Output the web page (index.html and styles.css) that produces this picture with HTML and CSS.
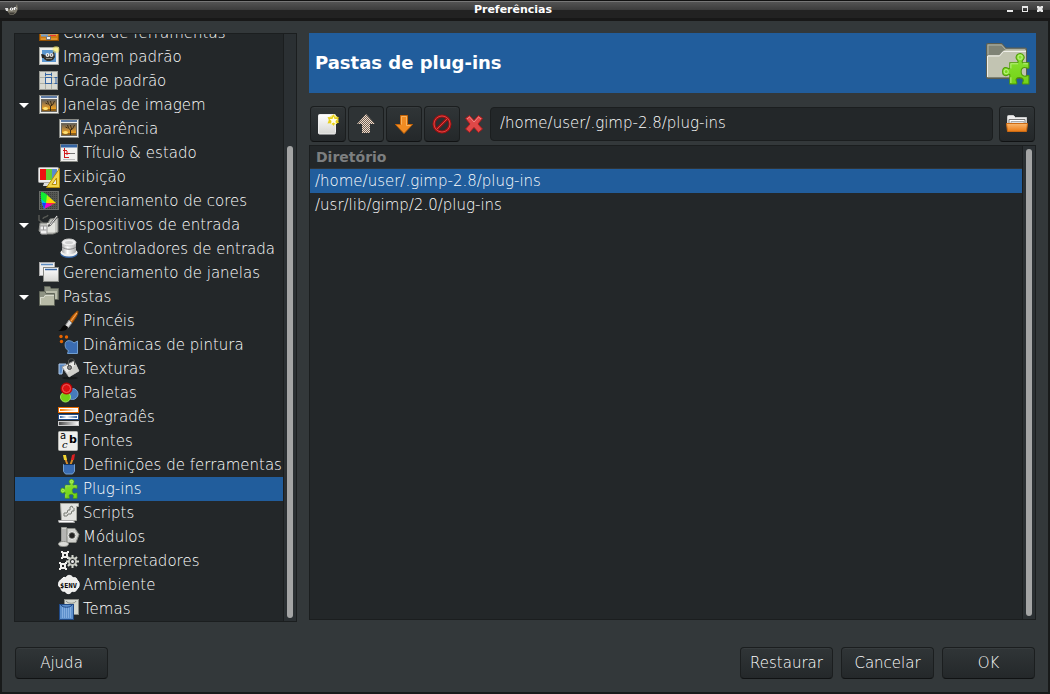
FILE: index.html
```html
<!DOCTYPE html>
<html lang="pt-BR">
<head>
<meta charset="utf-8">
<title>Preferências</title>
<link rel="stylesheet" href="styles.css">
</head>
<body>
<svg class="defs" width="0" height="0" aria-hidden="true">
  <defs>
    <linearGradient id="sunset" x1="0" y1="0" x2="0" y2="1"><stop offset="0" stop-color="#5d5c5a"/><stop offset=".45" stop-color="#b5853f"/><stop offset=".8" stop-color="#f2a21c"/><stop offset="1" stop-color="#9a6414"/></linearGradient>
    <linearGradient id="paper" x1="0" y1="0" x2="0" y2="1"><stop offset="0" stop-color="#fff"/><stop offset="1" stop-color="#d6d6d2"/></linearGradient>
    <linearGradient id="orange" x1="0" y1="0" x2="0" y2="1"><stop offset="0" stop-color="#f9b870"/><stop offset="1" stop-color="#ea7a14"/></linearGradient>
    <linearGradient id="og" x1="0" y1="0" x2="1" y2="0"><stop offset="0" stop-color="#f57900"/><stop offset="1" stop-color="#fff"/></linearGradient>
    <linearGradient id="bg" x1="0" y1="0" x2="1" y2="0"><stop offset="0" stop-color="#3465a4"/><stop offset=".4" stop-color="#fff"/><stop offset="1" stop-color="#3465a4"/></linearGradient>
    <linearGradient id="gg" x1="0" y1="0" x2="1" y2="0"><stop offset="0" stop-color="#444"/><stop offset="1" stop-color="#fff"/></linearGradient>
    <linearGradient id="knob" x1="0" y1="0" x2="1" y2="0"><stop offset="0" stop-color="#aaa"/><stop offset=".4" stop-color="#fff"/><stop offset="1" stop-color="#aaa"/></linearGradient>
    <linearGradient id="leaf" x1="0" y1="0" x2="0" y2="1"><stop offset="0" stop-color="#8ae234"/><stop offset="1" stop-color="#73d216"/></linearGradient>
    <pattern id="dots" width="2" height="2" patternUnits="userSpaceOnUse"><rect width="2" height="2" fill="#6d6257"/><rect width="1" height="1" fill="#f3dccb"/><rect x="1" y="1" width="1" height="1" fill="#f3dccb"/></pattern>
    <pattern id="mesh" width="2" height="2" patternUnits="userSpaceOnUse"><rect width="2" height="2" fill="#555753"/><rect width="1" height="1" fill="#3d3f3e"/></pattern>
    <symbol id="window-picture" viewBox="0 0 22 22">
      <rect x="1.5" y="1.5" width="19" height="18" fill="#eeeeec" stroke="#888a85"/>
      <path d="M3 3h16" stroke="#204a87" stroke-width="1.4"/>
      <rect x="3.5" y="5.5" width="15" height="12" fill="url(#sunset)" stroke="#6f6a5f"/>
      <path d="M4 15h14v2H4z" fill="#8b5e19"/><ellipse cx="7.500" cy="14.500" rx="2.500" ry="1.500" fill="#ffe173"/>
      <path d="M12.500 17v-5l-2-2-1-3m3 5 2-1 2-4m-3 4-1-4m-3 3-2-1" fill="none" stroke="#3a2b16"/>
    </symbol>
    <symbol id="puzzle" viewBox="0 0 27 31">
      <path d="M7.500 10.500H15c1-1 .5-2-.5-3-2-2-.5-6 3-6s5 4 3 6c-1 1-1.500 2-.5 3h6v5c-1 1-2-.5-4-.5-2.500 0-3.500 2-3.500 4s1 4.500 3.500 4.500c2 0 3-1.500 4-.5v8H20c-1-1 1-2 .5-4-.5-3-7-3-7 0 0 2 1.500 3 .5 4H7.500v-9c-1-1-2 1-4 1C1.500 23 .5 21 .5 19s1-4 3-4 3 2 4 1z" transform="translate(0 -1)" fill="url(#leaf)" stroke="#4e9a06"/>
      <path d="M8.500 15v-4.500h7m5 0h4.500m-16.500 13v5.500" fill="none" stroke="#b8f27c"/>
      <ellipse cx="17.500" cy="4" rx="2" ry="2" fill="none" stroke="#b8f27c"/><circle cx="4" cy="18" r="2" fill="none" stroke="#b8f27c"/>
    </symbol>
  </defs>
</svg>
<div class="window">
  <header class="titlebar">
    <svg class="app-icon" viewBox="0 0 14 12" aria-hidden="true"><path d="M1 4l4 1 5-1 2-4 1 5-2 4-3 2H5L3 8 1 6z" fill="#7d796c"/><path d="M0 4h3v3H1z" fill="#ddd"/><circle cx="6.500" cy="5" r="1.600" fill="#fff"/><circle cx="10" cy="4.500" r="1.500" fill="#fff"/><path d="M6 5h1m3 0h1" stroke="#111"/><path d="M4 8.500h6l-2 2H5z" fill="#3b3832"/></svg>
    <h1 class="window-title">Preferências</h1>
    <div class="window-controls">
      <button class="window-control" aria-label="Minimizar"><svg viewBox="0 0 7 7"><path d="M0 4h6v2H0z" fill="#e8e8e8"/></svg></button>
      <button class="window-control" aria-label="Maximizar"><svg viewBox="0 0 7 7"><path d="M0 0h6v6H0zM1 2v3h4V2z" fill="#e8e8e8" fill-rule="evenodd"/></svg></button>
      <button class="window-control" aria-label="Fechar"><svg viewBox="0 0 7 7"><path d="M0 0h2l1 1 1-1h2v2L5 3l1 1v2H4L3 5 2 6H0V4l1-1-1-1z" fill="#e8e8e8"/></svg></button>
    </div>
  </header>

  <div class="content">
    <nav class="panel sidebar" aria-label="Categorias">
      <ul class="tree" role="tree">
        <li class="item" role="treeitem"><span class="expander"></span><svg class="icon" viewBox="0 0 22 22"><rect x="1.500" y="3.500" width="19" height="15" fill="#ce7b12" stroke="#8f4e02"/><path d="M3 12h16v1H3zM3 17h16" stroke="#f5ac42" fill="#3465a4"/><rect x="8.500" y="14.500" width="4" height="3" fill="#eee" stroke="#777"/><path d="M3 13.500h7" stroke="#729fcf" stroke-width="2"/><path d="M12 13.500h6" stroke="#e33"/></svg>Caixa de ferramentas</li>
        <li class="item" role="treeitem"><span class="expander"></span><svg class="icon" viewBox="0 0 22 22"><rect x="1.500" y="1.500" width="19" height="17" fill="#eeeeec" stroke="#a5a7a2"/><rect x="4" y="4" width="14" height="12" fill="#5b96cf"/><path d="M4 8l3 1 7-1 2-3 1 6-2 3-3 1H9l-3-2z" fill="#33322e"/><path d="M3 8l3 1v3H4z" fill="#222"/><circle cx="9.500" cy="9" r="2" fill="#eee"/><circle cx="13.500" cy="9" r="2" fill="#ddd"/><path d="M9 9h1m3 0h1" stroke="#111"/><path d="M8 12.500h6" stroke="#8d877b"/><circle cx="18" cy="3.500" r="3.500" fill="#f7e65d" opacity=".5"/><circle cx="18" cy="3.500" r="2" fill="#fff38c"/></svg>Imagem padrão</li>
        <li class="item" role="treeitem"><span class="expander"></span><svg class="icon" viewBox="0 0 22 22"><rect x="1.500" y="1.500" width="18" height="18" fill="#d8dad2" stroke="#9b9d97"/><path d="M7.500 2v17m6-17v17M2 7.500h17m-17 6h17" stroke="#adb0a5"/><rect x="7.500" y="7.500" width="6" height="6" fill="#e2e3de" stroke="#3465a4"/><path d="M7 4.500h7M7.500 3v3m6-3v3m3 1.500h3m-3 6h3m-1.500-6v6" stroke="#3465a4" fill="none"/></svg>Grade padrão</li>
        <li class="item" role="treeitem" aria-expanded="true"><span class="expander open"></span><svg class="icon"><use href="#window-picture"/></svg>Janelas de imagem</li>
        <li class="item child" role="treeitem"><svg class="icon"><use href="#window-picture"/></svg>Aparência</li>
        <li class="item child" role="treeitem"><svg class="icon" viewBox="0 0 22 22"><rect x="2.500" y="2.500" width="17" height="17" fill="#f1f1ef" stroke="#888a85"/><path d="M3 4h16" stroke="#3465a4" stroke-width="3"/><path d="M5 8.500h4m-2 3h5m-5 4h4M6.500 6v10M9 9v4" stroke="#d01818"/><path d="M12 11.500h5" stroke="#777"/><path d="M5 17.500h12" stroke="#bbb"/></svg>Título &amp; estado</li>
        <li class="item" role="treeitem"><span class="expander"></span><svg class="icon" viewBox="0 0 22 22"><path d="M6 17h9v3H5z" fill="#ddd"/><rect x=".5" y="1.500" width="20" height="15" rx="1" fill="#eee" stroke="#aaa"/><path d="M2 3h6v11H2z" fill="#e11"/><path d="M8 3h6v11H8z" fill="#66ce32"/><path d="M14 3h5v11h-5z" fill="#588ace"/><path d="M21.500 2.500v19h-13z" fill="#f1d64b" stroke="#b68c05"/><path d="M18.500 12v6.500H14z" fill="#eee" stroke="#b68c05"/></svg>Exibição</li>
        <li class="item" role="treeitem"><span class="expander"></span><svg class="icon" viewBox="0 0 22 22"><rect x="1.500" y="1.500" width="19" height="18" fill="url(#mesh)" stroke="#6a6c69"/><path d="M3 2q4 0 8 5l7 6q-6 2-12 6Q2 10 3 2z" fill="#1e3"/><path d="M11 7l7 6-10 0z" fill="#fc0"/><path d="M9 5l3 3-4 5z" fill="#be1"/><path d="M18 13l-10 4 0-4z" fill="#f24"/><path d="M14 15l-8 4 2-6z" fill="#e0c"/><path d="M3 9l5 4-2 6q-2-5-3-10z" fill="#0be"/><path d="M4 13l4 0-2 6z" fill="#23f"/></svg>Gerenciamento de cores</li>
        <li class="item" role="treeitem" aria-expanded="true"><span class="expander open"></span><svg class="icon" viewBox="0 0 22 22"><path d="M1 1v5l4 3m0-4c0-3 4-1 5-4" fill="none" stroke="#555753" stroke-width="1.500"/><path d="M2 9h8l2-4 8-1v14l-5 2H4l-3-3z" fill="#c5c6c1" stroke="#7b7d78"/><path d="M9 9h8v9H9z" fill="#e3e4df"/><path d="M2 12h7v8H3l-1-3z" fill="#eee" stroke="#999"/><path d="M5.500 12v4m-3 0h6" stroke="#999"/><path d="M19.500 2L12 11l-2 1" stroke="#555" stroke-width="2" fill="none"/><path d="M19 2l-7 9" stroke="#eee"/></svg>Dispositivos de entrada</li>
        <li class="item child" role="treeitem"><svg class="icon" viewBox="0 0 22 22"><ellipse cx="11" cy="16" rx="8.500" ry="4" fill="#3465a4"/><ellipse cx="11" cy="14.500" rx="8.500" ry="4" fill="#f0f0ef"/><path d="M4 4v10c3 3 11 3 14 0V4z" fill="url(#knob)"/><path d="M4 9c4 3 10 3 14 0" fill="none" stroke="#888"/><ellipse cx="11" cy="4.500" rx="7" ry="3.500" fill="#eee" stroke="#ccc"/><ellipse cx="11" cy="4.500" rx="4" ry="1.500" fill="#cfcfcf"/></svg>Controladores de entrada</li>
        <li class="item" role="treeitem"><span class="expander"></span><svg class="icon" viewBox="0 0 22 22"><rect x="1.500" y=".5" width="15" height="13" fill="#eee" stroke="#aaa"/><path d="M3 2.500h12" stroke="#5d8dc2" stroke-width="1.500"/><rect x="5.500" y="5.500" width="15" height="14" fill="url(#paper)" stroke="#888a85"/><path d="M7 7.500h12" stroke="#3465a4" stroke-width="1.500"/></svg>Gerenciamento de janelas</li>
        <li class="item" role="treeitem" aria-expanded="true"><span class="expander open"></span><svg class="icon" viewBox="0 0 22 22"><path d="M6.500 10V.5H12l1 2h7.500v11H17" fill="#8f9484" stroke="#62675b"/><path d="M8 5h11v8H8z" fill="#babdab"/><path d="M1.500 19.500v-14H7l1 2h8.500v12z" fill="#8f9484" stroke="#62675b"/><path d="M2 11h4l1-2h9v10H2z" fill="#b8bba7"/><path d="M2.500 18v-6.500H6l1-2h9" fill="none" stroke="#d8dacd"/></svg>Pastas</li>
        <li class="item child" role="treeitem"><svg class="icon" viewBox="0 0 22 22"><path d="M20 1c0 4-3 8-6 12l-3-2c2-4 6-9 9-10z" fill="#ce6a10" stroke="#8f4902"/><path d="M19 3l-6 8" stroke="#f8b066"/><path d="M11 10l3 3-4 5-3-2z" fill="#ddd" stroke="#888"/><path d="M7 15l3 2c-1 4-5 4-10 4 4-1 3-5 7-6z" fill="#080808"/></svg>Pincéis</li>
        <li class="item child" role="treeitem"><svg class="icon" viewBox="0 0 22 22"><g fill="#e66500"><circle cx="3" cy="2.500" r="1.700"/><circle cx="8.500" cy="3" r="1.700"/><circle cx="3.500" cy="7.500" r="1.700"/></g><path d="M7.500 8.500C9 6 13 6 16 9l3.500-2v12.500H9.500l1-3c-3-1-4-5-3-8z" fill="#3a6cb2" stroke="#729fcf"/></svg>Dinâmicas de pintura</li>
        <li class="item child" role="treeitem"><svg class="icon" viewBox="0 0 22 22"><path d="M1 16V6h7l-3 3-1 7z" fill="#5c8ac3" stroke="#adc8ea"/><ellipse cx="12" cy="20" rx="8" ry="1.500" fill="#151819"/><path d="M4 9L16 3l5 10-10 6z" fill="#e9e9e6" stroke="#999"/><path d="M9 15L18 6l3 7-10 6z" fill="#cfcfca"/><path d="M10.500 10V3c0-3 6-3 6 0v4" fill="none" stroke="#555753"/><circle cx="11.500" cy="9.500" r="2" fill="#888" stroke="#444"/></svg>Texturas</li>
        <li class="item child" role="treeitem"><svg class="icon" viewBox="0 0 22 22"><circle cx="14.500" cy="12" r="5.500" fill="#467abc" stroke="#739fcf"/><circle cx="7.500" cy="15" r="5" fill="#73d216" stroke="#a4ea5c"/><circle cx="8.500" cy="6.500" r="5.500" fill="#d91212" stroke="#b00"/><circle cx="8.500" cy="6.500" r="4" fill="none" stroke="#f05a5a"/></svg>Paletas</li>
        <li class="item child" role="treeitem"><svg class="icon" viewBox="0 0 22 22"><rect x=".5" y="1.500" width="20" height="5" fill="#fff" stroke="#e66a00"/><path d="M2 3h17v2H2z" fill="url(#og)"/><rect x=".5" y="8.500" width="20" height="5" fill="#fff" stroke="#204a87"/><path d="M2 10h17v2H2z" fill="url(#bg)"/><rect x=".5" y="15.500" width="20" height="4" fill="url(#gg)" stroke="#ccc"/></svg>Degradês</li>
        <li class="item child" role="treeitem"><svg class="icon glyphs" viewBox="0 0 22 22"><rect x=".5" y="1.500" width="19" height="19" rx="1" fill="#eeeeec" stroke="#b5b6b2"/><text x="2" y="9" class="glyph-a">a</text><text x="11" y="13" class="glyph-b">b</text><text x="4" y="18" class="glyph-c">c</text></svg>Fontes</li>
        <li class="item child" role="treeitem"><svg class="icon" viewBox="0 0 22 22"><path d="M7 4l3 8m5-8l-3 8" stroke="#d68a2a" stroke-width="2"/><path d="M5 1h3l1 5H6z" fill="#f1d431"/><path d="M14 1l3-1-1 6h-3z" fill="#d22"/><path d="M5.500 10.500h11v7l-2 2.500h-7l-2-2.500z" fill="#3a6cb2" stroke="#729fcf"/><path d="M6 10.500h10" stroke="#173764"/></svg>Definições de ferramentas</li>
        <li class="item child selected" role="treeitem" aria-selected="true"><svg class="icon" viewBox="0 0 22 22"><use href="#puzzle" x="1" y="1" width="20" height="20"/></svg>Plug-ins</li>
        <li class="item child" role="treeitem"><svg class="icon" viewBox="0 0 22 22"><path d="M2.500 1.500h18v3h-2v14H3.500z" fill="#e4e5e0" stroke="#a5a79f"/><path d="M.5 18.500h15l1 2H1z" fill="#fff" stroke="#aaa"/><path d="M6 14v-3h3l1-3h2V5l2-1 1 2m-9 8h3l1-2h3l1-3h2V6" fill="none" stroke="#777a72"/></svg>Scripts</li>
        <li class="item child" role="treeitem"><svg class="icon" viewBox="0 0 22 22"><path d="M9 2.500h8l4 6-3 8H9z" fill="#cfd0cc" stroke="#888a85"/><circle cx="14" cy="9.500" r="4" fill="#777a75" stroke="#eee"/><circle cx="14" cy="9.500" r="2.500" fill="#222"/><path d="M3.500 1.500h5v16h-5z" fill="#d0d1cd" stroke="#999b96"/><path d="M4 4h4M4 6h4M4 8h4M4 10h4M4 12h4M4 14h4" stroke="#999"/><ellipse cx="5.500" cy="18" rx="5" ry="2.500" fill="#dcddd9" stroke="#8c8e89"/></svg>Módulos</li>
        <li class="item child" role="treeitem"><svg class="icon" viewBox="0 0 22 22"><g fill="none" stroke="#eeeeec" stroke-width="2"><rect x="5" y="3" width="4" height="4"/><rect x="3" y="14" width="4" height="4"/></g><path d="M3 1h2v2H3zM9 1h2v2H9zM3 7h2v2H3zM9 7h2v2H9zM1 12h2v2H1zM7 12h2v2H7zM1 18h2v2H1zM7 18h2v2H7z" fill="#eeeeec"/><circle cx="14.500" cy="11.500" r="3.500" fill="none" stroke="#babdb6" stroke-width="2"/><path d="M14.500 5v3m0 7v3M8 11.500h3m7 0h3M10 7l2 2m5 5l2 2m0-9l-2 2m-5 5l-2 2" stroke="#d3d7cf" stroke-width="2"/><circle cx="14.500" cy="11.500" r="1.500" fill="#eee"/></svg>Interpretadores</li>
        <li class="item child" role="treeitem"><svg class="icon" viewBox="0 0 22 22"><path d="M4 5c1-2 3-2 4-1 1-4 6-3 7 0 2-1 4 0 4 2 3 2 3 7 0 9-1 3-4 3-5 2-2 4-6 3-7 0-3 1-4-1-4-3-4-2-3-7 1-9z" fill="#eeeeec" stroke="#fff"/><text x="2" y="14" class="glyph-env">$ENV</text></svg>Ambiente</li>
        <li class="item child" role="treeitem"><svg class="icon" viewBox="0 0 22 22"><rect x="6.500" y="1.500" width="14" height="15" fill="#d3d7cf" stroke="#888a85"/><path d="M8 3c2 3 9 3 10 0" fill="none" stroke="#8b8e87"/><rect x="1.500" y="6.500" width="14" height="15" fill="#5d90cc" stroke="#204a87"/><path d="M4.500 9v11m2-11v11m2-11v11m2-11v11m2-11v11" stroke="#82ade0"/><path d="M3 7c2 3 9 3 11 0" fill="none" stroke="#204a87"/></svg>Temas</li>
      </ul>
      <div class="scrollbar"><div class="thumb tree-thumb"></div></div>
    </nav>

    <main class="page">
      <div class="banner">
        <h2 class="banner-title">Pastas de plug-ins</h2>
        <svg class="banner-icon" viewBox="0 0 48 48" aria-hidden="true">
          <path d="M2.500 38V5.500q0-1 1-1H18l4 4.500h19.500q1 0 1 1V38q0 1.500-1 1.500H4q-1.500 0-1.500-1.500z" fill="#7f8375" stroke="#595d52"/><path d="M4 15.500V6h13.500l4 4.500H41" fill="none" stroke="#b0b3a5"/><path d="M4 16h11q1 0 2-2l2-2q1-1 3-1h20v27H4z" fill="#c2c4b2"/><path d="M3.500 38V17h12l4-4.500H42" fill="none" stroke="#eeeee8"/>
          <use href="#puzzle" x="18" y="14" width="28" height="32"/>
        </svg>
      </div>
      <div class="toolbar">
        <button class="button tool" aria-label="Novo"><svg class="tool-icon" viewBox="0 0 24 24"><path d="M2.500 3.500q0-1 1-1h15q1 0 1 1v17q0 1.500-1 1.500h-15q-1 0-1-1z" fill="url(#paper)" stroke="#eee"/><circle cx="17.500" cy="8" r="5" fill="#f6ec7a"/><path d="M17.500 2l1.500 3.500 4-.5-1.500 3 1.500 3-4 0-1.500 3-2-3-4 .5 1.500-3.500-1.500-3 4 .5z" fill="#e7cf19"/><path d="M17.500 4.500l1 2.500h3l-2 2 .5 3-2.500-1.500L15 12l.5-3-2-2h3z" fill="#fffee8"/></svg></button>
        <button class="button tool" aria-label="Subir" disabled><svg class="tool-icon" viewBox="0 0 24 24"><path d="M12 2l9 10h-5v9H8v-9H3z" fill="url(#dots)"/></svg></button>
        <button class="button tool" aria-label="Descer"><svg class="tool-icon" viewBox="0 0 24 24"><path d="M8.500 3.500h7v9h5L12 21.500l-8.500-9h5z" fill="#f18b22" stroke="#c76508"/><path d="M9.500 12.500v-8h5v9h4" fill="none" stroke="#f8b25f"/></svg></button>
        <button class="button tool" aria-label="Redefinir"><svg class="tool-icon" viewBox="0 0 24 24"><g fill="none"><circle cx="12" cy="12" r="8" stroke="#a01010" stroke-width="3"/><path d="M6.500 17.500l11-11" stroke="#a01010" stroke-width="3"/><circle cx="12" cy="12" r="8" stroke="#dc4444"/><path d="M6.500 17.500l11-11" stroke="#dc4444"/></g></svg></button>
        <svg class="invalid-icon" viewBox="0 0 20 20" role="img" aria-label="Pasta inválida"><path d="M1.500 4.500l4-3 4.500 5 4.500-5 4 3-4.500 5.500 4.500 5-4 3.500-4.500-5-4.500 5-4-3.500L6 10z" fill="#df4848" stroke="#a91a1a"/><path d="M3 5l2.500-2L10 8l4.500-5L17 5" fill="none" stroke="#ef8686"/></svg>
        <input class="entry" type="text" aria-label="Pasta" value="/home/user/.gimp-2.8/plug-ins">
        <button class="button tool" aria-label="Abrir pasta"><svg class="tool-icon" viewBox="0 0 24 24"><path d="M2.500 13V4.500q0-1 1-1h5l2 2h11v8" fill="#eee" stroke="#ccc"/><path d="M4 13V7.500h16V13" fill="#fff" stroke="#777"/><path d="M6 9.500h13V13H6z" fill="#ddd" stroke="#aaa"/><path d="M1.500 11.500h21l-1 8h-19z" fill="url(#orange)" stroke="#ce6b12"/></svg></button>
      </div>
      <div class="panel directories">
        <div class="list">
          <table class="table">
            <thead><tr><th class="heading" scope="col">Diretório</th></tr></thead>
            <tbody>
              <tr class="row selected"><td class="cell">/home/user/.gimp-2.8/plug-ins</td></tr>
              <tr class="row"><td class="cell">/usr/lib/gimp/2.0/plug-ins</td></tr>
            </tbody>
          </table>
        </div>
        <div class="scrollbar"><div class="thumb"></div></div>
      </div>
    </main>
  </div>

  <footer class="actions">
    <button class="button action">Ajuda</button>
    <span class="spacer"></span>
    <button class="button action">Restaurar</button>
    <button class="button action">Cancelar</button>
    <button class="button action">OK</button>
  </footer>
</div>
</body>
</html>
```
FILE: styles.css
```css
* { box-sizing: border-box; }

body {
  margin: 0;
  background: #33383a;
  color: #fff;
  font-family: "DejaVu Sans", sans-serif;
  font-size: 15px;
  font-weight: 200;
  line-height: 24px;
}

button, input { font: inherit; color: inherit; }

.defs { position: absolute; }

.window {
  display: flex;
  flex-direction: column;
  height: 100vh;
  border: solid #181a1a;
  border-width: 0 2px 2px;
}

.titlebar {
  display: flex;
  align-items: center;
  height: 21px;
  padding: 0 6px 2px 5px;
  margin: 0 -2px;
  background: linear-gradient(#111 0 1px, #777 1px 2px, #535353 2px, #3c3c3c 10px, #222 10px 18px, #181818 18px);
}

.app-icon { width: 14px; height: 12px; }

.window-title {
  flex: 1;
  margin: 0;
  font-size: 11px;
  font-weight: 700;
  line-height: 18px;
  text-align: center;
}

.window-controls { display: flex; gap: 8px; }

.window-control {
  width: 7px;
  height: 7px;
  padding: 0;
  border: 0;
  background: none;
}

.window-control svg { display: block; width: 7px; height: 7px; }

.content {
  display: flex;
  flex: 1;
  gap: 12px;
  min-height: 0;
  padding: 12px 12px 0;
}

.panel {
  display: flex;
  min-height: 0;
  border: 1px solid #1b1e1f;
  background: #232729;
}

.sidebar { flex: 0 0 283px; }

.tree {
  display: flex;
  flex: 1;
  flex-direction: column;
  justify-content: flex-end;
  overflow: hidden;
  margin: 0;
  padding: 0;
  list-style: none;
}

.item {
  display: flex;
  flex: none;
  align-items: center;
  height: 24px;
  padding-left: 4px;
  white-space: nowrap;
}

.item.child { padding-left: 43px; }

.selected { background: #215d9c; }

.expander { flex: none; width: 19px; }

.open::before {
  content: "";
  display: block;
  width: 0;
  border: solid transparent;
  border-width: 5px 5px 0;
  border-top-color: #fff;
}

.icon { flex: none; width: 22px; height: 22px; margin-right: 3px; }

.glyph-a { font: 400 10px "DejaVu Sans", sans-serif; }
.glyph-b { font: 700 11px "DejaVu Sans", sans-serif; }
.glyph-c { font: italic 10px "DejaVu Serif", serif; }
.glyph-env { font: 700 7px "DejaVu Sans Mono", monospace; }

.scrollbar {
  flex: 0 0 13px;
  display: flex;
  flex-direction: column;
  padding: 3px;
  border-left: 1px solid #1b1e1f;
  background: #2b3033;
}

.thumb {
  flex: 1;
  border-radius: 3px;
  background: #a4a5a5;
}

.tree-thumb { margin-top: 109px; }

.page {
  display: flex;
  flex: 1;
  flex-direction: column;
  min-width: 0;
  padding-bottom: 2px;
}

.banner {
  display: flex;
  align-items: center;
  justify-content: space-between;
  height: 60px;
  padding: 0 4px 0 6px;
  background: #215d9c;
}

.banner-title { margin: 0; font-size: 18px; font-weight: 700; }

.banner-icon { width: 48px; height: 48px; }

.toolbar {
  display: flex;
  align-items: center;
  gap: 2px;
  padding: 13px 1px 3px;
}

.button {
  border: 1px solid #1b1e1f;
  border-bottom-color: #101213;
  border-radius: 4px;
  background: linear-gradient(#303537, #24282a);
  box-shadow: inset 0 1px #373c3e;
}

.tool {
  display: flex;
  flex: none;
  align-items: center;
  justify-content: center;
  width: 36px;
  height: 36px;
  padding: 0;
}

.tool:disabled { background: #2e3335; box-shadow: none; }

.tool-icon { width: 24px; height: 24px; }

.invalid-icon { flex: none; width: 20px; height: 20px; margin: 0 4px 0 2px; }

.entry {
  flex: 1;
  min-width: 0;
  height: 34px;
  margin-right: 4px;
  padding: 0 9px 2px;
  border: 1px solid #1b1e1f;
  border-radius: 4px;
  background: #232729;
}

.directories { flex: 1; }

.list { flex: 1; }

.table { width: 100%; border-spacing: 0; }

.heading {
  height: 23px;
  padding: 0 6px;
  border-bottom: 1px solid #303436;
  color: #7d7f80;
  font-size: 14px;
  font-weight: 700;
  line-height: 22px;
  text-align: left;
}

.cell { height: 24px; padding: 0 5px; }

.actions {
  display: flex;
  gap: 8px;
  padding: 25px 13px 13px;
}

.spacer { flex: 1; }

.action { width: 93px; height: 32px; padding: 0; }
```
